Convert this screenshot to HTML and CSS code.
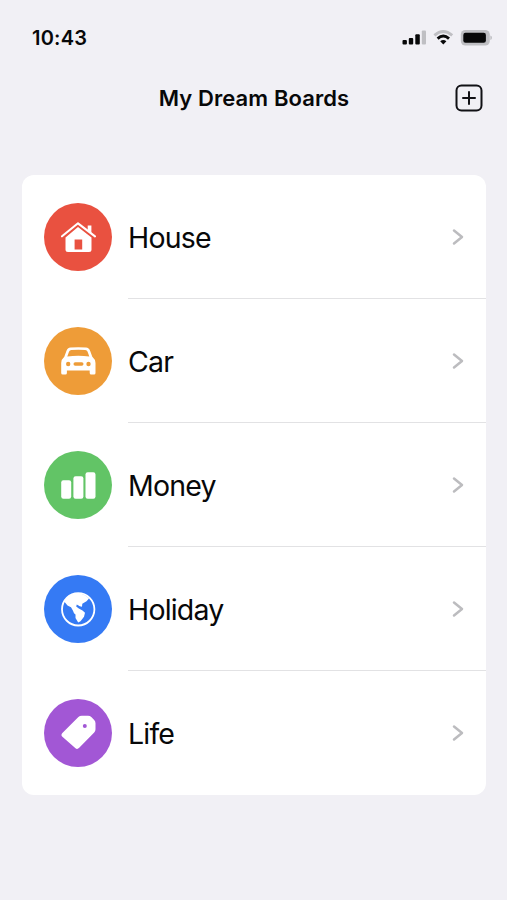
FILE: index.html
```html
<!DOCTYPE html>
<html lang="en">
<head>
<meta charset="utf-8">
<title>My Dream Boards</title>
<link rel="stylesheet" href="styles.css">
</head>
<body>
<header class="status">
  <span class="time">10:43</span>
  <svg class="indicators" width="92" height="20" viewBox="0 0 92 20">
    <rect x="2.5" y="11" width="4.4" height="4.4" rx="1"/>
    <rect x="8.8" y="9" width="4.4" height="6.4" rx="1"/>
    <rect x="15.3" y="5.3" width="4.5" height="10.1" rx="1"/>
    <rect class="dim" x="21.8" y="1.5" width="4.2" height="13.9" rx="1"/>
    <g fill="none" stroke-width="2.9">
      <path class="dim-line" d="M34.4 6.4Q43.3 -1.4 52.2 6.4"/>
      <path stroke="#080809" d="M37.6 9.6Q43.3 4.5 49 9.6"/>
    </g>
    <path d="M40.2 12.2Q43.3 9.6 46.4 12.2L43.3 15.4Z"/>
    <rect class="dim" x="60.8" y="1" width="29" height="15.6" rx="4.6"/>
    <rect x="63.3" y="3.7" width="22.6" height="10" rx="2.2"/>
    <path class="dim" d="M90.3 6.5Q92 7 92 8.8T90.3 11Z"/>
  </svg>
</header>
<nav class="bar">
  <h1>My Dream Boards</h1>
  <svg class="add" width="28" height="28" viewBox="0 0 28 28" fill="none" stroke="#111115" stroke-width="2" stroke-linecap="round">
    <rect x="1.5" y="1.5" width="25" height="25" rx="5"/>
    <path d="M14 8v12M8 14h12"/>
  </svg>
</nav>
<main class="list">
  <div class="row">
    <svg class="icon house" viewBox="0 0 68 68">
      <path d="M18 33.3L34 20.3L51 33.3" fill="none" stroke="#fff" stroke-width="2.1" stroke-linecap="round" stroke-linejoin="round"/>
      <path d="M43.7 22.5h3.7v7.8l-3.7-3Z"/>
      <path fill-rule="evenodd" d="M34 24L47.5 34.5V46.5Q47.5 49 45 49H24Q21.5 49 21.5 46.5V34.5ZM30.6 36.5V46.5H38.2V36.5Z"/>
    </svg>
    <div class="cell"><span>House</span><svg class="chevron" viewBox="0 0 12 18"><path d="M2 2.5L10 9L2 15.5"/></svg></div>
  </div>
  <div class="row">
    <svg class="icon car" viewBox="0 0 68 68">
      <path fill-rule="evenodd" d="M26.5 20.6Q34.3 19.8 42 20.6Q45 20.8 46.2 24L48.3 29.8Q51.5 32.5 51.5 36V46Q51.5 47.6 50 47.6H47.2Q45.7 47.6 45.7 46V43.5H22.9V46Q22.9 47.6 21.4 47.6H18.7Q17.2 47.6 17.2 46V36Q17.2 32.5 20.3 29.8L22.4 24Q23.5 20.8 26.5 20.6ZM27.4 23Q25.6 23 25 24.7L23.3 29.4Q34.3 28.2 45.3 29.4L43.6 24.7Q43 23 41.2 23Q34.3 22.4 27.4 23Z"/>
      <g class="cut"><circle cx="24.2" cy="37" r="2.2"/><circle cx="44.5" cy="37" r="2.2"/><rect x="29.5" y="35.3" width="10" height="3.4" rx="1.7"/></g>
    </svg>
    <div class="cell"><span>Car</span><svg class="chevron" viewBox="0 0 12 18"><path d="M2 2.5L10 9L2 15.5"/></svg></div>
  </div>
  <div class="row">
    <svg class="icon money" viewBox="0 0 68 68">
      <rect x="17.2" y="29.3" width="10" height="18.4" rx="2.2"/>
      <rect x="29.4" y="25.3" width="10" height="22.4" rx="2.2"/>
      <rect x="41.5" y="21.3" width="10" height="26.4" rx="2.2"/>
    </svg>
    <div class="cell"><span>Money</span><svg class="chevron" viewBox="0 0 12 18"><path d="M2 2.5L10 9L2 15.5"/></svg></div>
  </div>
  <div class="row">
    <svg class="icon holiday" viewBox="0 0 68 68">
      <circle cx="34.2" cy="34.3" r="16.2" fill="none" stroke="#fff" stroke-width="1.8"/>
      <path d="M20.2 26.5L23.5 30.5L27 32.2L29 35.8L30 38.2L31.5 39.5V43L34.2 47.6L36.5 46.3L40 41.8L41 37.8L38.5 35.5L34.8 33.5L32.2 31.5L32.8 29.5L35.8 31.3L38 31.7L38.3 28.8L42.5 26.2L45 23.5Q40.5 18.5 34.2 18.3Q26 18 20.2 26.5Z"/>
    </svg>
    <div class="cell"><span>Holiday</span><svg class="chevron" viewBox="0 0 12 18"><path d="M2 2.5L10 9L2 15.5"/></svg></div>
  </div>
  <div class="row">
    <svg class="icon life" viewBox="0 0 68 68">
      <path d="M37.8 16.7H44Q46 16.7 47.3 18L50.2 21Q51.5 22.3 51.5 24.3V30.3Q51.5 32.2 50.2 33.5L35.2 48.8Q33.2 50.9 31.2 49L18.4 37.8Q16.5 35.8 18.4 33.9L34.4 18.1Q35.8 16.7 37.8 16.7Z"/>
      <circle class="cut" cx="40.8" cy="27" r="2"/>
    </svg>
    <div class="cell"><span>Life</span><svg class="chevron" viewBox="0 0 12 18"><path d="M2 2.5L10 9L2 15.5"/></svg></div>
  </div>
</main>
</body>
</html>
```
FILE: styles.css
```css
* { box-sizing: border-box; }
body {
  margin: 0;
  min-height: 900px;
  background: #f1f0f5;
  color: #080809;
  font-family: Inter, "Liberation Sans", sans-serif;
}
.status {
  display: flex;
  justify-content: space-between;
  align-items: center;
  height: 76px;
  padding: 0 15px 0 32px;
}
.time { font-size: 20px; font-weight: 600; letter-spacing: 0.2px; }
.indicators { margin-top: 2px; fill: #080809; }
.indicators .dim { fill: #bfbfc3; }
.dim-line { stroke: #bfbfc3; }
.bar {
  display: grid;
  grid-template-columns: 28px 1fr 28px;
  align-items: center;
  height: 44px;
  padding: 0 24.5px 0 25.5px;
}
h1 {
  grid-column: 2;
  margin: 0;
  text-align: center;
  font-size: 22px;
  line-height: 28px;
  font-weight: 600;
  letter-spacing: 0.1px;
}
.list {
  width: 464px;
  margin: 55px 0 0 22px;
  border-radius: 12px;
  background: #fff;
}
.row {
  display: flex;
  align-items: center;
  height: 124px;
  padding-left: 21.5px;
}
.icon { width: 68px; height: 68px; border-radius: 50%; fill: #fff; flex: none; }
.house { background: #e95140; }
.car { background: #ee9c38; }
.money { background: #62c466; }
.holiday { background: #357af4; }
.life { background: #a257d5; }
.car .cut { fill: #ee9c38; }
.life .cut { fill: #a257d5; }
.cell {
  flex: 1;
  display: flex;
  align-items: center;
  justify-content: space-between;
  height: 124px;
  margin-left: 16.5px;
  padding: 1px 22px 0 0;
  border-bottom: 1px solid #e2e2e4;
  font-size: 28.5px;
  letter-spacing: -0.8px;
}
.cell span { padding-top: 1px; }
.row:last-child .cell { border-bottom-color: transparent; }
.chevron {
  width: 12px;
  height: 18px;
  fill: none;
  stroke: #bcbcbf;
  stroke-width: 2.5;
  stroke-linecap: round;
  stroke-linejoin: round;
}
```
